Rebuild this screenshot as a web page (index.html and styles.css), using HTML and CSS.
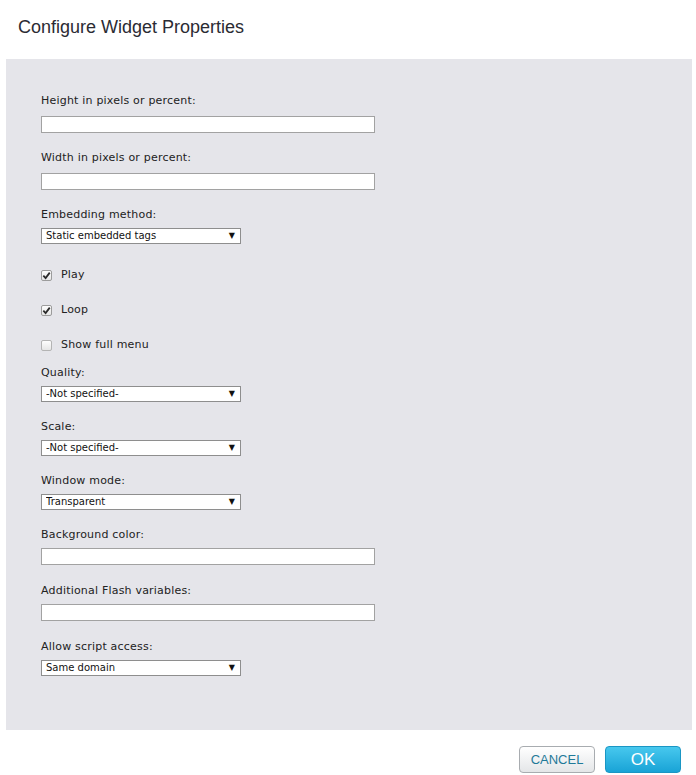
FILE: index.html
```html
<!DOCTYPE html>
<html lang="en">
<head>
    <meta charset="UTF-8">
    <meta name="viewport" content="width=device-width, initial-scale=1.0">
    <title>Configure Widget Properties</title>
    <link rel="stylesheet" href="styles.css">
</head>
<body>
    <div class="dialog">
        <h1 class="dialog-title">Configure Widget Properties</h1>

        <div class="panel">
            <div class="field field-wide">
                <label class="field-label" for="heightInput">Height in pixels or percent:</label>
                <input class="text-input" id="heightInput" type="text">
            </div>
            <div class="field field-wide">
                <label class="field-label" for="widthInput">Width in pixels or percent:</label>
                <input class="text-input" id="widthInput" type="text">
            </div>
            <div class="field field-last">
                <label class="field-label" for="embedSelect">Embedding method:</label>
                <div class="select-wrap">
                    <select class="select-input" id="embedSelect">
                        <option>Static embedded tags</option>
                    </select>
                    <span class="select-arrow">&#9660;</span>
                </div>
            </div>

            <div class="check-row">
                <span class="check-box checked">
                    <svg viewBox="0 0 10 10" width="9" height="9"><path d="M1.5 5.2 L4 7.8 L8.6 1.8" fill="none" stroke="#2a2a2a" stroke-width="2"/></svg>
                </span>
                <span class="check-label">Play</span>
            </div>
            <div class="check-row">
                <span class="check-box checked">
                    <svg viewBox="0 0 10 10" width="9" height="9"><path d="M1.5 5.2 L4 7.8 L8.6 1.8" fill="none" stroke="#2a2a2a" stroke-width="2"/></svg>
                </span>
                <span class="check-label">Loop</span>
            </div>
            <div class="check-row check-row-last">
                <span class="check-box"></span>
                <span class="check-label">Show full menu</span>
            </div>

            <div class="field">
                <label class="field-label" for="qualitySelect">Quality:</label>
                <div class="select-wrap">
                    <select class="select-input" id="qualitySelect">
                        <option>-Not specified-</option>
                    </select>
                    <span class="select-arrow">&#9660;</span>
                </div>
            </div>
            <div class="field">
                <label class="field-label" for="scaleSelect">Scale:</label>
                <div class="select-wrap">
                    <select class="select-input" id="scaleSelect">
                        <option>-Not specified-</option>
                    </select>
                    <span class="select-arrow">&#9660;</span>
                </div>
            </div>
            <div class="field">
                <label class="field-label" for="wmodeSelect">Window mode:</label>
                <div class="select-wrap">
                    <select class="select-input" id="wmodeSelect">
                        <option>Transparent</option>
                    </select>
                    <span class="select-arrow">&#9660;</span>
                </div>
            </div>
            <div class="field field-text">
                <label class="field-label" for="bgInput">Background color:</label>
                <input class="text-input" id="bgInput" type="text">
            </div>
            <div class="field field-text">
                <label class="field-label" for="flashVarsInput">Additional Flash variables:</label>
                <input class="text-input" id="flashVarsInput" type="text">
            </div>
            <div class="field">
                <label class="field-label" for="scriptSelect">Allow script access:</label>
                <div class="select-wrap">
                    <select class="select-input" id="scriptSelect">
                        <option>Same domain</option>
                    </select>
                    <span class="select-arrow">&#9660;</span>
                </div>
            </div>
        </div>

        <div class="dialog-buttons">
            <button class="btn btn-cancel">CANCEL</button>
            <button class="btn btn-ok">OK</button>
        </div>
    </div>
</body>
</html>
```

FILE: styles.css
```css
body {
    margin: 0;
    background: #ffffff;
    font-family: "DejaVu Sans", Verdana, sans-serif;
    color: #222;
}
.dialog {
    width: 696px;
}
.dialog-title {
    margin: 0;
    padding: 16px 0 0 18px;
    height: 43px;
    box-sizing: border-box;
    font-family: "Liberation Sans", Arial, sans-serif;
    font-size: 18px;
    font-weight: normal;
    line-height: 22px;
    color: #2b2b33;
}
.panel {
    margin: 16px 4px 0 6px;
    padding: 35px 35px 53px;
    height: 671px;
    box-sizing: border-box;
    background: #e5e5ea;
}
.field {
    margin-bottom: 18px;
}
.field-text {
    margin-bottom: 19px;
}
.field-label {
    display: block;
    font-size: 11px;
    line-height: 14px;
    letter-spacing: 0.2px;
    margin-bottom: 6px;
    color: #222;
}
.field-wide .field-label {
    margin-bottom: 8px;
}
.field-last {
    margin-bottom: 24px;
}
.text-input {
    display: block;
    width: 334px;
    height: 17px;
    box-sizing: border-box;
    border: 1px solid #a2a2a2;
    background: #fff;
    padding: 0 4px;
    margin: 0;
    outline: none;
}
.select-wrap {
    position: relative;
    width: 200px;
    height: 16px;
}
.select-input {
    appearance: none;
    -webkit-appearance: none;
    display: block;
    width: 200px;
    height: 16px;
    box-sizing: border-box;
    border: 1px solid #8e8e8e;
    border-radius: 0;
    background: #fff;
    padding: 0 0 0 4px;
    margin: 0;
    font-family: "DejaVu Sans", Verdana, sans-serif;
    font-size: 10px;
    line-height: 14px;
    color: #111;
    outline: none;
}
.select-arrow {
    position: absolute;
    right: 6px;
    top: 3px;
    font-size: 8px;
    line-height: 10px;
    color: #111;
    pointer-events: none;
}
.check-row {
    display: flex;
    align-items: center;
    height: 14px;
    margin-bottom: 21px;
}
.check-row-last {
    margin-bottom: 14px;
}
.check-box {
    width: 11px;
    height: 11px;
    box-sizing: border-box;
    border: 1px solid #b4b4b4;
    border-radius: 2px;
    background: linear-gradient(#fdfdfd, #e6e6e6);
    display: flex;
    align-items: center;
    justify-content: center;
    margin-right: 9px;
}
.check-box.checked {
    border-color: #9c9c9c;
}
.check-label {
    font-size: 11px;
    line-height: 14px;
    letter-spacing: 0.2px;
    color: #222;
}
.dialog-buttons {
    display: flex;
    justify-content: flex-end;
    gap: 10px;
    padding: 16px 15px 0 0;
}
.btn {
    width: 76px;
    height: 27px;
    border-radius: 4px;
    font-family: "Liberation Sans", Arial, sans-serif;
    cursor: pointer;
    padding: 0;
}
.btn-cancel {
    border: 1px solid #a8acb0;
    background: linear-gradient(#ffffff, #e4e6e8);
    color: #1f7a99;
    font-size: 13px;
}
.btn-ok {
    border: 1px solid #1a96c4;
    background: linear-gradient(#47c8ee, #19a3d6);
    color: #ffffff;
    font-size: 17px;
}
```
